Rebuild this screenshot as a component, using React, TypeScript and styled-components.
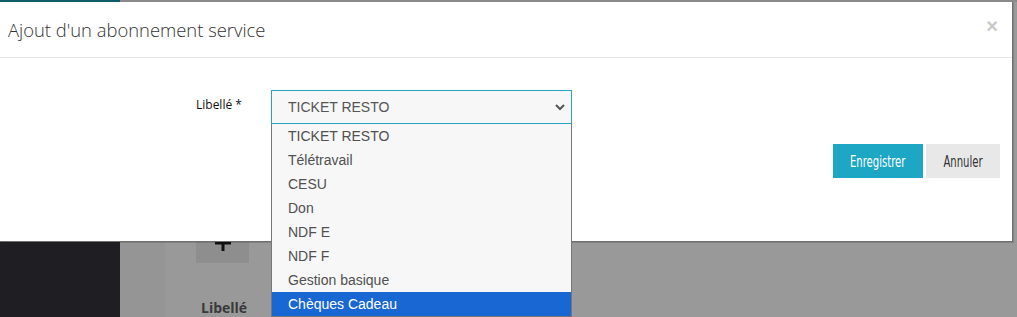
import React from 'react';
import styled, { createGlobalStyle } from 'styled-components';

const Global = createGlobalStyle`
  html, body { margin: 0; padding: 0; }
  body {
    width: 1017px;
    height: 317px;
    overflow: hidden;
    background: #999999;
    font-family: "Open Sans", "Liberation Sans", sans-serif;
  }
`;

const Stage = styled.div`
  position: relative;
  width: 1017px;
  height: 317px;
  overflow: hidden;
  display: flex;
`;

/* ---------- dimmed page behind the dialog ---------- */
const Sidebar = styled.aside`
  width: 120px;
  flex: none;
  background: #1f1f23;
  border-top: 2px solid #0f5d6b;
`;

const Main = styled.main`
  flex: 1;
  display: flex;
  background: #959595;
  border-top: 2px solid #8a8a8a;
`;

const Gutter = styled.div`
  width: 45px;
  flex: none;
`;

const Card = styled.section`
  flex: 1;
  background: #999999;
  padding: 220px 0 0 31px;
  display: flex;
  flex-direction: column;
  align-items: flex-start;
`;

const AddButton = styled.div`
  width: 53px;
  height: 44px;
  background: #8e8e8e;
  display: flex;
  align-items: center;
  justify-content: center;
`;

const CardLabel = styled.div`
  margin: 35px 0 0 5px;
  font-family: "Open Sans", sans-serif;
  font-weight: 700;
  font-size: 14px;
  color: #3a3a3a;
`;

/* ---------- dialog ---------- */
const Modal = styled.div`
  position: absolute;
  left: 0;
  top: 2px;
  width: 1012px;
  height: 239px;
  background: #ffffff;
  border-right: 1px solid #707070;
  border-bottom: 1px solid #707070;
  box-shadow: 1px 1px 0 rgba(0, 0, 0, 0.15);
  z-index: 2;
  display: flex;
  flex-direction: column;
`;

const Header = styled.header`
  height: 56px;
  flex: none;
  box-sizing: border-box;
  border-bottom: 1px solid #e5e5e5;
  display: flex;
  align-items: center;
  justify-content: space-between;
  padding: 0 14px 0 8px;
`;

const Title = styled.h4`
  margin: 0;
  font-family: "Open Sans", sans-serif;
  font-weight: 300;
  font-size: 18.4px;
  color: #333333;
`;

const Close = styled.span`
  font-family: "Liberation Sans", Arial, sans-serif;
  font-weight: 700;
  font-size: 20px;
  line-height: 1;
  color: #c9c9c9;
  margin-top: -8px;
`;

const Body = styled.div`
  flex: 1;
  padding: 32px 12px 0 0;
  display: flex;
  flex-direction: column;
`;

const FieldRow = styled.div`
  display: flex;
  align-items: flex-start;
`;

const Label = styled.label`
  width: 271px;
  flex: none;
  box-sizing: border-box;
  padding: 6px 0 0 196px;
  white-space: nowrap;
  font-family: "Open Sans", sans-serif;
  font-size: 12px;
  font-weight: 500;
  color: #111111;
`;

const SelectWrap = styled.div`
  position: relative;
  width: 301px;
`;

const SelectBox = styled.div`
  height: 34px;
  box-sizing: border-box;
  border: 1px solid #2aa3c1;
  background: #f7f7f7;
  display: flex;
  align-items: center;
  justify-content: space-between;
  padding: 0 5px 0 16px;
  font-family: "Liberation Sans", Arial, sans-serif;
  font-size: 14px;
  color: #555555;
`;

const OptionList = styled.ul`
  position: absolute;
  top: 34px;
  left: 0;
  width: 301px;
  box-sizing: border-box;
  margin: 0;
  padding: 0;
  list-style: none;
  background: #f7f7f7;
  border: 1px solid #767676;
  border-top: none;
  z-index: 3;
`;

const Option = styled.li<{ $selected?: boolean }>`
  height: 24px;
  display: flex;
  align-items: center;
  padding-left: 16px;
  font-family: "Liberation Sans", Arial, sans-serif;
  font-size: 14px;
  color: ${(p) => (p.$selected ? '#ffffff' : '#505050')};
  background: ${(p) => (p.$selected ? '#1967d2' : 'transparent')};
`;

const Actions = styled.div`
  margin-top: 20px;
  display: flex;
  justify-content: flex-end;
  gap: 3px;
`;

const Button = styled.button<{ $primary?: boolean }>`
  height: 34px;
  width: ${(p) => (p.$primary ? '90px' : '74px')};
  border: none;
  padding: 0;
  background: ${(p) => (p.$primary ? '#1ea6c5' : '#e8e8e8')};
  color: ${(p) => (p.$primary ? '#ffffff' : '#333333')};
  display: flex;
  align-items: center;
  justify-content: center;
  cursor: pointer;
`;

const ButtonText = styled.span`
  display: inline-block;
  font-family: "DejaVu Sans Condensed", "DejaVu Sans", sans-serif;
  font-stretch: condensed;
  font-size: 16px;
  transform: scaleX(0.7);
  white-space: nowrap;
`;

const options = [
  'TICKET RESTO',
  'Télétravail',
  'CESU',
  'Don',
  'NDF E',
  'NDF F',
  'Gestion basique',
  'Chèques Cadeau',
];

export default function App() {
  return (
    <>
      <Global />
      <Stage>
        <Sidebar />
        <Main>
          <Gutter />
          <Card>
            <AddButton>
              <svg width="16" height="16" viewBox="0 0 16 16">
                <path d="M6.5 0h3v6.5H16v3H9.5V16h-3V9.5H0v-3h6.5z" fill="#111" />
              </svg>
            </AddButton>
            <CardLabel>Libellé</CardLabel>
          </Card>
        </Main>

        <Modal>
          <Header>
            <Title>Ajout d'un abonnement service</Title>
            <Close>×</Close>
          </Header>
          <Body>
            <FieldRow>
              <Label>Libellé *</Label>
              <SelectWrap>
                <SelectBox>
                  <span>TICKET RESTO</span>
                  <svg width="12" height="8" viewBox="0 0 12 8">
                    <path d="M2 2l4 4 4-4" fill="none" stroke="#555" strokeWidth="2" />
                  </svg>
                </SelectBox>
                <OptionList>
                  {options.map((o, i) => (
                    <Option key={o} $selected={i === options.length - 1}>
                      {o}
                    </Option>
                  ))}
                </OptionList>
              </SelectWrap>
            </FieldRow>
            <Actions>
              <Button $primary>
                <ButtonText>Enregistrer</ButtonText>
              </Button>
              <Button>
                <ButtonText>Annuler</ButtonText>
              </Button>
            </Actions>
          </Body>
        </Modal>
      </Stage>
    </>
  );
}
